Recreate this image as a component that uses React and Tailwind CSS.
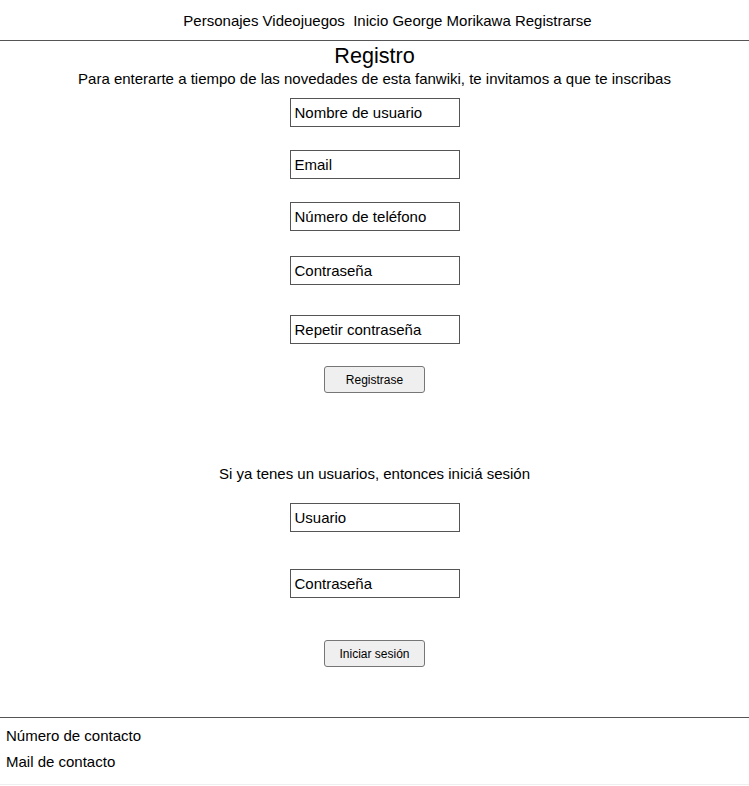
const fields = [
  { label: 'Nombre de usuario', mt: 'mt-[11px]' },
  { label: 'Email', mt: 'mt-[23px]' },
  { label: 'Número de teléfono', mt: 'mt-[23px]' },
  { label: 'Contraseña', mt: 'mt-[25px]' },
  { label: 'Repetir contraseña', mt: 'mt-[30px]' },
]

function Field({ label, className }) {
  return (
    <input
      defaultValue={label}
      className={
        'block w-[170px] h-[29px] border border-[#555] px-[4px] text-[15px] text-black bg-white outline-none ' +
        className
      }
    />
  )
}

function Button({ children, className }) {
  return (
    <button
      className={
        'block w-[101px] h-[27px] rounded-[3px] border border-[#767676] bg-[#efefef] text-[12px] text-black ' +
        className
      }
    >
      {children}
    </button>
  )
}

export default function App() {
  return (
    <div
      className="w-[749px] h-[786px] bg-white text-black text-[15px] overflow-hidden"
      style={{ fontFamily: '"Liberation Sans", Arial, sans-serif' }}
    >
      <nav className="h-[40px] flex items-center justify-center pt-[3px] pl-[26px]">
        <span>Personajes Videojuegos&nbsp; Inicio George Morikawa Registrarse</span>
      </nav>
      <div className="h-px bg-[#555]" />

      <div className="flex flex-col items-center">
        <h2 className="text-[21.6px] leading-[26px] mt-[2px]">Registro</h2>
        <p className="leading-[17px] mt-[1px]">
          Para enterarte a tiempo de las novedades de esta fanwiki, te invitamos a que te inscribas
        </p>
        {fields.map((f) => (
          <Field key={f.label} label={f.label} className={f.mt} />
        ))}
        <Button className="mt-[22px]">Registrase</Button>

        <p className="leading-[17px] mt-[72px]">Si ya tenes un usuarios, entonces iniciá sesión</p>
        <Field label="Usuario" className="mt-[21px]" />
        <Field label="Contraseña" className="mt-[37px]" />
        <Button className="mt-[42px]">Iniciar sesión</Button>
      </div>

      <div className="h-px bg-[#555] mt-[50px]" />
      <footer className="px-[6px] pt-[9px] h-[67px] border-b border-[#eee]">
        <p className="leading-[17px]">Número de contacto</p>
        <p className="leading-[17px] mt-[9px]">Mail de contacto</p>
      </footer>
    </div>
  )
}
